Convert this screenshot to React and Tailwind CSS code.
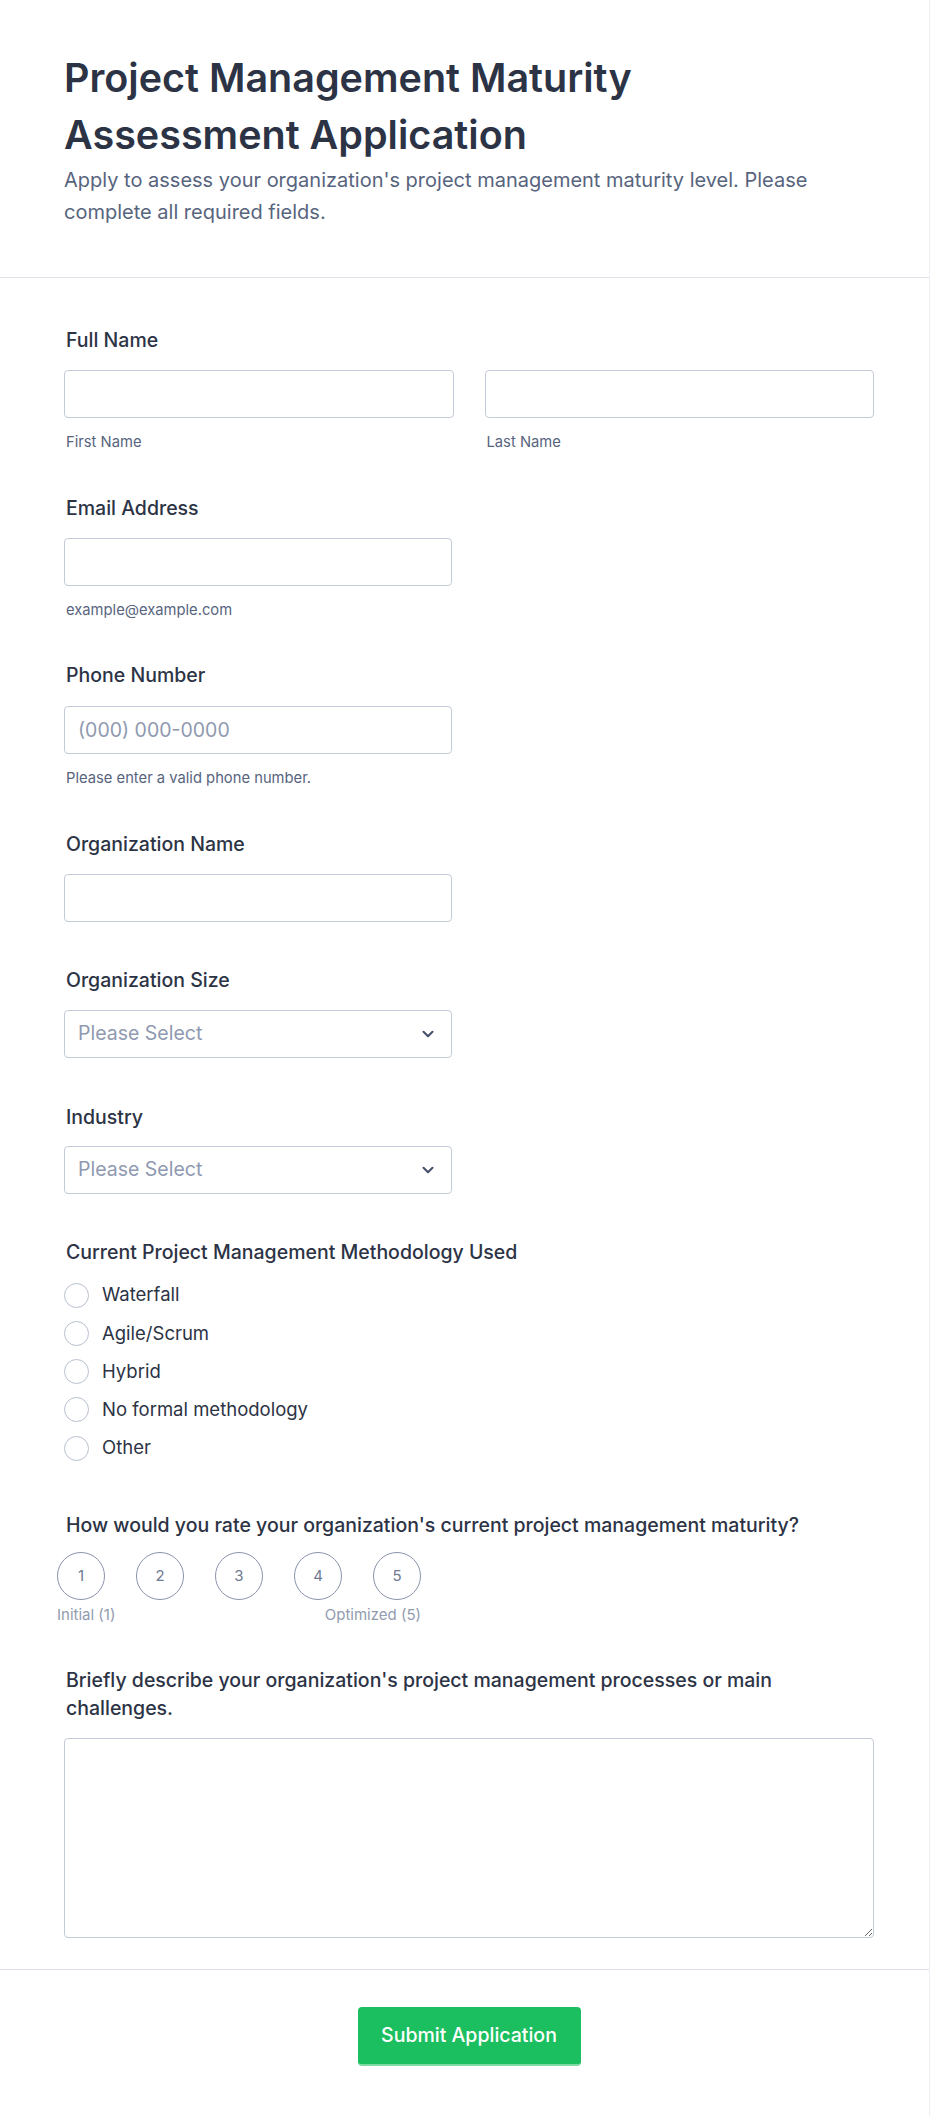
import React from 'react';
import { ChevronDown } from 'lucide-react';

const Label = ({ children, className = '' }) => (
  <div className={`text-[19.5px] leading-[28px] font-medium text-[#2c3345] ${className}`}>{children}</div>
);

const Helper = ({ children }) => (
  <div className="mt-[14px] pl-[2px] text-[14.75px] leading-5 text-[#57647e]">{children}</div>
);

const inputCls =
  'block w-full h-[48px] rounded-[4px] border border-[#c3cad8] bg-white px-[13px] text-[19.5px] text-[#2c3345] placeholder:text-[#8f99b0] outline-none';

const SelectBox = () => (
  <div className="relative w-[388px]">
    <select className={`${inputCls} appearance-none text-[#8f99b0]`} defaultValue="">
      <option value="">Please Select</option>
    </select>
    <ChevronDown className="absolute right-[15px] top-1/2 -translate-y-1/2 w-[18px] h-[18px] text-[#454f6b] pointer-events-none" strokeWidth={2.75} />
  </div>
);

const metodlar = ['Waterfall', 'Agile/Scrum', 'Hybrid', 'No formal methodology', 'Other'];

export default function App() {
  return (
    <div className="w-[930px] min-h-[2116px] bg-white border-r border-[#eceef3] font-['Inter','Noto_Sans',sans-serif]">
      {/* Başlık */}
      <div className="pl-16 pr-[55px] pt-[50px] pb-[49px] border-b border-[#dfe3ea]">
        <h1 className="text-[39.5px] leading-[57px] font-semibold text-[#2c3345]">
          Project Management Maturity<br />Assessment Application
        </h1>
        <p className="text-[20px] leading-[32px] text-[#57647e]">
          Apply to assess your organization's project management maturity level. Please complete all required fields.
        </p>
      </div>

      {/* Form alanları */}
      <div className="pl-16 pr-[55px] pt-[48px] pb-[31px]">
        <div>
          <Label className="pl-[2px]">Full Name</Label>
          <div className="mt-4 grid grid-cols-2 gap-[31px]">
            <div>
              <input type="text" className={inputCls} />
              <Helper>First Name</Helper>
            </div>
            <div>
              <input type="text" className={inputCls} />
              <Helper>Last Name</Helper>
            </div>
          </div>
        </div>

        <div className="mt-[42px]">
          <Label className="pl-[2px]">Email Address</Label>
          <div className="mt-4 w-[388px]">
            <input type="email" className={inputCls} />
          </div>
          <Helper>example@example.com</Helper>
        </div>

        <div className="mt-[41px]">
          <Label className="pl-[2px]">Phone Number</Label>
          <div className="mt-[17px] w-[388px]">
            <input type="tel" placeholder="(000) 000-0000" className={inputCls} />
          </div>
          <Helper>Please enter a valid phone number.</Helper>
        </div>

        <div className="mt-[42px]">
          <Label className="pl-[2px]">Organization Name</Label>
          <div className="mt-4 w-[388px]">
            <input type="text" className={inputCls} />
          </div>
        </div>

        <div className="mt-[44px]">
          <Label className="pl-[2px]">Organization Size</Label>
          <div className="mt-4">
            <SelectBox />
          </div>
        </div>

        <div className="mt-[45px]">
          <Label className="pl-[2px]">Industry</Label>
          <div className="mt-[15px]">
            <SelectBox />
          </div>
        </div>

        <div className="mt-[44px]">
          <Label className="pl-[2px]">Current Project Management Methodology Used</Label>
          <div className="mt-[10px]">
            {metodlar.map((m) => (
              <label key={m} className="flex items-center h-[38.25px] gap-[13px] cursor-pointer">
                <span className="w-[25px] h-[25px] rounded-full border-[1.5px] border-[#b9c0d0] bg-white shrink-0" />
                <span className="text-[18.5px] text-[#2c3345]">{m}</span>
              </label>
            ))}
          </div>
        </div>

        <div className="mt-[44px]">
          <Label className="pl-[2px]">How would you rate your organization's current project management maturity?</Label>
          <div className="mt-[13px] -ml-[7px] inline-flex flex-col">
            <div className="flex gap-[31px]">
              {[1, 2, 3, 4, 5].map((n) => (
                <button key={n} className="w-[48px] h-[48px] rounded-full border-[1.5px] border-[#8a94aa] bg-white flex items-center justify-center text-[15px] text-[#6f7a93]">
                  {n}
                </button>
              ))}
            </div>
            <div className="mt-[5px] flex justify-between text-[15px] leading-5 text-[#929bb0]">
              <span>Initial (1)</span>
              <span>Optimized (5)</span>
            </div>
          </div>
        </div>

        <div className="mt-[41px]">
          <Label className="pl-[2px] leading-[27px]">Briefly describe your organization's project management processes or main challenges.</Label>
          <textarea className="mt-4 block w-full h-[200px] rounded-[4px] border border-[#c3cad8] bg-white p-3 text-[16px] outline-none" />
        </div>
      </div>

      {/* Gönder */}
      <div className="pl-16 pr-[55px] pt-[37px] pb-[50px] border-t border-[#dfe3ea] flex justify-center">
        <button className="w-[223px] h-[59px] rounded-[4px] bg-[#1bbf5f] border-b-2 border-[#7fd9a3] text-white text-[19.5px] font-medium">
          Submit Application
        </button>
      </div>
    </div>
  );
}
